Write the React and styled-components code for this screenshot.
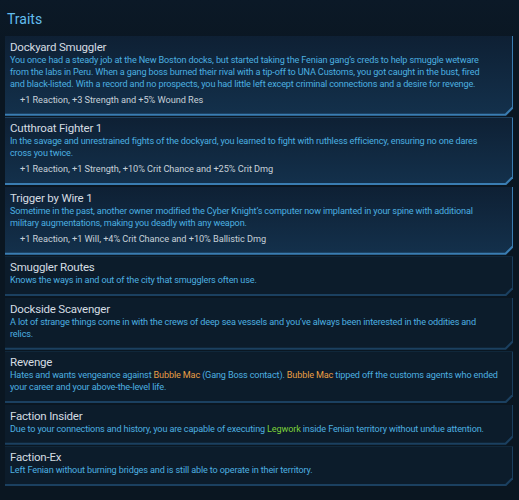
import React from 'react'
import styled, { createGlobalStyle } from 'styled-components'

const GlobalStyle = createGlobalStyle`
  html, body {
    margin: 0;
    padding: 0;
    background: #0a1621;
  }
  body {
    font-family: Roboto, "Liberation Sans", sans-serif;
  }
`

// each description is a list of lines, each line a list of parts
const traits = [
  {
    name: 'Dockyard Smuggler',
    lines: [
      ['You once had a steady job at the New Boston docks, but started taking the Fenian gang\u2019s creds to help smuggle wetware'],
      ['from the labs in Peru. When a gang boss burned their rival with a tip-off to UNA Customs, you got caught in the bust, fired'],
      ['and black-listed. With a record and no prospects, you had little left except criminal connections and a desire for revenge.'],
    ],
    bonus: '+1 Reaction, +3 Strength and +5% Wound Res',
    active: true,
  },
  {
    name: 'Cutthroat Fighter 1',
    lines: [
      ['In the savage and unrestrained fights of the dockyard, you learned to fight with ruthless efficiency, ensuring no one dares'],
      ['cross you twice.'],
    ],
    bonus: '+1 Reaction, +1 Strength, +10% Crit Chance and +25% Crit Dmg',
    active: true,
  },
  {
    name: 'Trigger by Wire 1',
    lines: [
      ['Sometime in the past, another owner modified the Cyber Knight\u2019s computer now implanted in your spine with additional'],
      ['military augmentations, making you deadly with any weapon.'],
    ],
    bonus: '+1 Reaction, +1 Will, +4% Crit Chance and +10% Ballistic Dmg',
    active: true,
  },
  {
    name: 'Smuggler Routes',
    lines: [['Knows the ways in and out of the city that smugglers often use.']],
  },
  {
    name: 'Dockside Scavenger',
    lines: [
      ['A lot of strange things come in with the crews of deep sea vessels and you\u2019ve always been interested in the oddities and'],
      ['relics.'],
    ],
  },
  {
    name: 'Revenge',
    lines: [
      [
        'Hates and wants vengeance against ',
        { tone: 'orange', value: 'Bubble Mac' },
        ' (Gang Boss contact). ',
        { tone: 'orange', value: 'Bubble Mac' },
        ' tipped off the customs agents who ended',
      ],
      ['your career and your above-the-level life.'],
    ],
  },
  {
    name: 'Faction Insider',
    lines: [
      [
        'Due to your connections and history, you are capable of executing ',
        { tone: 'green', value: 'Legwork' },
        ' inside Fenian territory without undue attention.',
      ],
    ],
  },
  {
    name: 'Faction-Ex',
    lines: [['Left Fenian without burning bridges and is still able to operate in their territory.']],
  },
]

const chamfer = `polygon(0 0, 100% 0, 100% calc(100% - 7px), calc(100% - 7px) 100%, 0 100%)`

const Page = styled.div`
  width: 519px;
  height: 500px;
  overflow: hidden;
  padding: 0 6px 0 5px;
  box-sizing: border-box;
  background: linear-gradient(180deg, #0b1927 0%, #0a1621 60px, #0a1621 100%);
`

const Heading = styled.h2`
  margin: 0;
  padding: 9px 0 0 2px;
  height: 36px;
  box-sizing: border-box;
  font-size: 14px;
  font-weight: 400;
  line-height: 20px;
  color: #62bdee;
`

const List = styled.div`
  display: flex;
  flex-direction: column;
  gap: 1.7px;
`

const CardFrame = styled.div`
  clip-path: ${chamfer};
  padding: 0 1px 2px 0;
  background: ${(p) => (p.$active ? '#3a7db2' : '#1b4060')};
`

const Card = styled.div`
  clip-path: ${chamfer};
  padding: 4px 8px 7.8px 5px;
  background: ${(p) =>
    p.$active ? 'linear-gradient(180deg, #0e2034 0%, #13304b 100%)' : '#0c1c2b'};
`

const Title = styled.div`
  font-size: 11.5px;
  line-height: 14px;
  letter-spacing: -0.2px;
  color: #d5dce2;
`

const Text = styled.div`
  font-size: 9.1px;
  line-height: 12px;
  letter-spacing: -0.14px;
  color: #4cb0e0;
`

const Line = styled.div`
  white-space: nowrap;
`

const Mark = styled.span`
  color: ${(p) => (p.$tone === 'green' ? '#7bd03a' : '#e79e45')};
`

const Bonus = styled.div`
  margin-top: 4px;
  padding-left: 10px;
  font-size: 9.2px;
  line-height: 12px;
  letter-spacing: -0.05px;
  color: #c6d0d8;
`

function Trait({ trait }) {
  return (
    <CardFrame $active={trait.active}>
      <Card $active={trait.active}>
        <Title>{trait.name}</Title>
        <Text>
          {trait.lines.map((line, li) => (
            <Line key={li}>
              {line.map((part, i) =>
                typeof part === 'string' ? (
                  <React.Fragment key={i}>{part}</React.Fragment>
                ) : (
                  <Mark key={i} $tone={part.tone}>
                    {part.value}
                  </Mark>
                )
              )}
            </Line>
          ))}
        </Text>
        {trait.bonus && <Bonus>{trait.bonus}</Bonus>}
      </Card>
    </CardFrame>
  )
}

export default function App() {
  return (
    <>
      <GlobalStyle />
      <Page>
        <Heading>Traits</Heading>
        <List>
          {traits.map((t) => (
            <Trait key={t.name} trait={t} />
          ))}
        </List>
      </Page>
    </>
  )
}
